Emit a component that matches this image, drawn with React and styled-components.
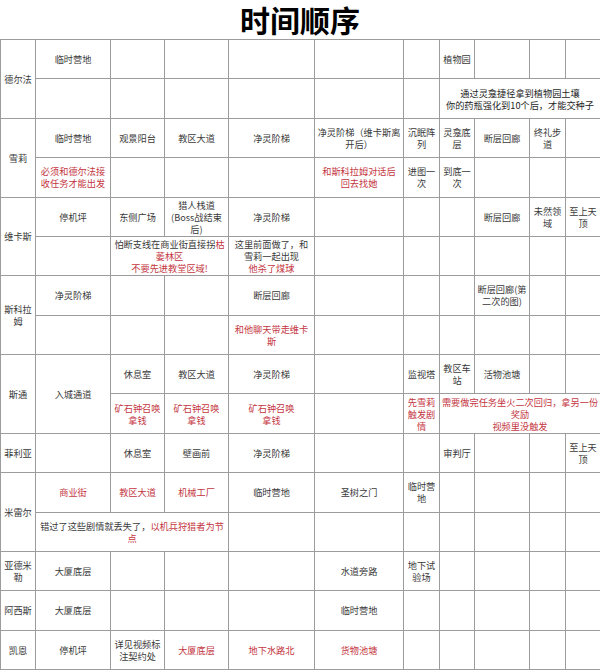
import React from "react";
import styled, { createGlobalStyle } from "styled-components";

const Global = createGlobalStyle`
  html, body { margin: 0; padding: 0; background: #fff; }
  body { font-family: "Noto Sans CJK SC", "Noto Sans", sans-serif; }
`;

const Page = styled.div`
  width: 600px;
  height: 670px;
  display: flex;
  flex-direction: column;
  background: #fff;
  overflow: hidden;
`;

const Title = styled.h1`
  margin: 0;
  height: 39px;
  display: flex;
  align-items: center;
  justify-content: center;
  font-size: 30px;
  font-weight: 700;
  color: #000;
  line-height: 39px;
`;

const Grid = styled.div`
  display: grid;
  grid-template-columns: 35px 75px 54px 64px 86px 89px 36px 35px 55px 36px 35px;
  grid-template-rows: repeat(16, 1fr);
  height: 631px;
  border-top: 1px solid #9c9c9c;
  border-left: 1px solid #9c9c9c;
  box-sizing: border-box;
`;

const Cell = styled.div`
  grid-column: ${(p) => p.$c + 1} / span ${(p) => p.$cs};
  grid-row: ${(p) => p.$r} / span ${(p) => p.$rs};
  border-right: 1px solid #9c9c9c;
  border-bottom: 1px solid #9c9c9c;
  box-sizing: border-box;
  display: flex;
  flex-direction: column;
  align-items: center;
  justify-content: center;
  text-align: center;
  padding: 0 2px;
  font-size: 9.2px;
  line-height: 12px;
  color: ${(p) => (p.$red ? "#c4363f" : p.$dark ? "#1e1e1e" : "#3a3a3a")};
  white-space: nowrap;
  min-width: 0;
`;

const Red = styled.span`
  color: #c4363f;
`;

const Line = styled.span`
  display: block;
`;

const lines = (s) => s.split("|").map((l, i) => <Line key={i}>{l}</Line>);

const data = [
  [1, 0, "德尔法", { rs: 2 }],
  [1, 1, "临时营地"],
  [1, 7, "植物园"],
  [2, 7, "通过灵龛捷径拿到植物园土壤|你的药瓶强化到10个后，才能交种子", { cs: 4, dark: true }],
  [3, 0, "雪莉", { rs: 2 }],
  [3, 1, "临时营地"],
  [3, 2, "观景阳台"],
  [3, 3, "教区大道"],
  [3, 4, "净灵阶梯"],
  [3, 5, "净灵阶梯（维卡斯离|开后）"],
  [3, 6, "沉眠阵|列"],
  [3, 7, "灵龛底|层"],
  [3, 8, "断层回廊"],
  [3, 9, "终礼步|道"],
  [4, 1, "必须和德尔法接|收任务才能出发", { red: true }],
  [4, 5, "和斯科拉姆对话后|回去找她", { red: true }],
  [4, 6, "进图一|次"],
  [4, 7, "到底一|次"],
  [5, 0, "维卡斯", { rs: 2 }],
  [5, 1, "停机坪"],
  [5, 2, "东侧广场"],
  [5, 3, "猎人栈道|(Boss战结束|后)"],
  [5, 4, "净灵阶梯"],
  [5, 8, "断层回廊"],
  [5, 9, "未然领|域"],
  [5, 10, "至上天|顶"],
  [
    6,
    2,
    <>
      <Line>
        怕断支线在商业街直接拐<Red>枯</Red>
      </Line>
      <Line>
        <Red>萎林区</Red>
      </Line>
      <Line>
        <Red>不要先进教堂区域!</Red>
      </Line>
    </>,
    { cs: 2 },
  ],
  [
    6,
    4,
    <>
      <Line>这里前面做了，和</Line>
      <Line>雪莉一起出现</Line>
      <Line>
        <Red>他杀了煤球</Red>
      </Line>
    </>,
  ],
  [7, 0, "斯科拉|姆", { rs: 2 }],
  [7, 1, "净灵阶梯"],
  [7, 4, "断层回廊"],
  [7, 8, "断层回廊(第|二次的图)"],
  [8, 4, "和他聊天带走维卡|斯", { red: true }],
  [9, 0, "斯通", { rs: 2 }],
  [9, 1, "入城通道", { rs: 2 }],
  [9, 2, "休息室"],
  [9, 3, "教区大道"],
  [9, 4, "净灵阶梯"],
  [9, 6, "监视塔"],
  [9, 7, "教区车|站"],
  [9, 8, "活物池塘"],
  [10, 2, "矿石钟召唤|拿钱", { red: true }],
  [10, 3, "矿石钟召唤|拿钱", { red: true }],
  [10, 4, "矿石钟召唤|拿钱", { red: true }],
  [10, 6, "先雪莉|触发剧|情", { red: true }],
  [10, 7, "需要做完任务坐火二次回归，拿另一份|奖励|视频里没触发", { red: true, cs: 4 }],
  [11, 0, "菲利亚"],
  [11, 2, "休息室"],
  [11, 3, "壁画前"],
  [11, 4, "净灵阶梯"],
  [11, 7, "审判厅"],
  [11, 10, "至上天|顶"],
  [12, 0, "米雷尔", { rs: 2 }],
  [12, 1, "商业街", { red: true }],
  [12, 2, "教区大道", { red: true }],
  [12, 3, "机械工厂", { red: true }],
  [12, 4, "临时营地"],
  [12, 5, "圣树之门"],
  [12, 6, "临时营|地"],
  [
    13,
    1,
    <>
      <Line>
        错过了这些剧情就丢失了，<Red>以机兵狩猎者为节</Red>
      </Line>
      <Line>
        <Red>点</Red>
      </Line>
    </>,
    { cs: 3 },
  ],
  [14, 0, "亚德米|勒"],
  [14, 1, "大厦底层"],
  [14, 5, "水道旁路"],
  [14, 6, "地下试|验场"],
  [15, 0, "阿西斯"],
  [15, 1, "大厦底层"],
  [15, 5, "临时营地"],
  [16, 0, "凯恩"],
  [16, 1, "停机坪"],
  [16, 2, "详见视频标|注契约处"],
  [16, 3, "大厦底层", { red: true }],
  [16, 4, "地下水路北", { red: true }],
  [16, 5, "货物池塘", { red: true }],
];

function buildCells() {
  const occ = new Set();
  const cells = [];
  data.forEach(([r, c, content, o = {}], i) => {
    const cs = o.cs || 1;
    const rs = o.rs || 1;
    for (let rr = r; rr < r + rs; rr++)
      for (let cc = c; cc < c + cs; cc++) occ.add(rr + ":" + cc);
    cells.push(
      <Cell key={"d" + i} $r={r} $c={c} $cs={cs} $rs={rs} $red={o.red} $dark={o.dark}>
        {typeof content === "string" ? lines(content) : content}
      </Cell>
    );
  });
  for (let r = 1; r <= 16; r++)
    for (let c = 0; c < 11; c++)
      if (!occ.has(r + ":" + c))
        cells.push(<Cell key={"e" + r + "-" + c} $r={r} $c={c} $cs={1} $rs={1} />);
  return cells;
}

export default function App() {
  return (
    <Page>
      <Global />
      <Title>时间顺序</Title>
      <Grid>{buildCells()}</Grid>
    </Page>
  );
}
